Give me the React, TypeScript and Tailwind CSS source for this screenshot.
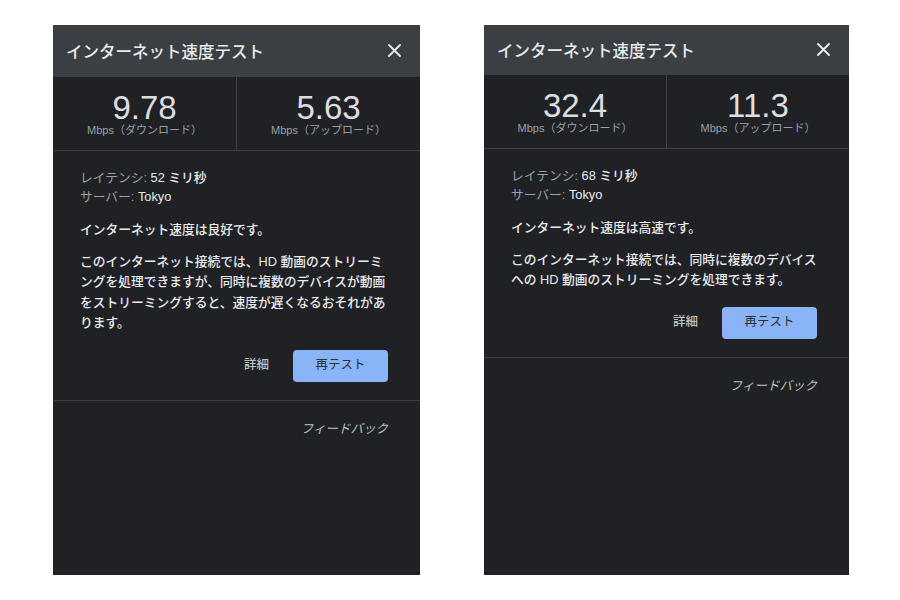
const jp = { fontFamily: '"Liberation Sans", "Noto Sans CJK JP", sans-serif' };

interface SpeedResult {
    download: string;
    upload: string;
    latency: string;
    verdict: string;
    description: string;
    panelClass: string;
    headerClass: string;
}

const results: SpeedResult[] = [
    {
        download: "9.78",
        upload: "5.63",
        latency: "52",
        verdict: "インターネット速度は良好です。",
        description:
            "このインターネット接続では、HD 動画のストリーミングを処理できますが、同時に複数のデバイスが動画をストリーミングすると、速度が遅くなるおそれがあります。",
        panelClass: "w-[367px]",
        headerClass: "h-[52px]",
    },
    {
        download: "32.4",
        upload: "11.3",
        latency: "68",
        verdict: "インターネット速度は高速です。",
        description:
            "このインターネット接続では、同時に複数のデバイスへの HD 動画のストリーミングを処理できます。",
        panelClass: "w-[365px]",
        headerClass: "h-[50px]",
    },
];

function SpeedCell({ value, label, divider }: { value: string; label: string; divider?: boolean }) {
    return (
        <div
            className={
                "flex flex-1 flex-col items-center pt-[14px] pb-[13px]" +
                (divider ? " border-r border-[#3c4043]" : "")
            }
        >
            <div className="text-[33px] leading-[33px] text-[#dcdde0]" style={{ fontFamily: '"Liberation Sans", sans-serif' }}>
                {value}
            </div>
            <div className="text-[11px] leading-[13px] text-[#9aa0a6]">{label}</div>
        </div>
    );
}

function SpeedPanel({ result }: { result: SpeedResult }) {
    return (
        <div className={"flex h-[550px] flex-col bg-[#202124] " + result.panelClass} style={jp}>
            <div
                className={
                    "flex items-center justify-between bg-[#3b3e42] pr-[19px] pl-[13px] " + result.headerClass
                }
            >
                <span className="mt-[2px] text-[16.5px] font-medium text-[#e8eaed]">インターネット速度テスト</span>
                <svg width="13" height="13" viewBox="0 0 13 13" className="mb-[2px]">
                    <path d="M1 1L12 12M12 1L1 12" stroke="#e8eaed" strokeWidth="1.9" strokeLinecap="round" />
                </svg>
            </div>

            <div className="flex border-b border-[#3c4043]">
                <SpeedCell value={result.download} label="Mbps（ダウンロード）" divider />
                <SpeedCell value={result.upload} label="Mbps（アップロード）" />
            </div>

            <div className="border-b border-[#3c4043] pt-[18px] pr-[32px] pb-[18px] pl-[27px] text-[12.75px]">
                <div className="leading-[18.5px] text-[#9aa0a6]">
                    レイテンシ: <span className="font-medium text-[#e8eaed]">{result.latency} ミリ秒</span>
                </div>
                <div className="leading-[18.5px] text-[#9aa0a6]">
                    サーバー: <span className="font-medium text-[#e8eaed]">Tokyo</span>
                </div>
                <p className="mt-[14px] leading-[20.5px] font-medium text-[#e8eaed]">{result.verdict}</p>
                <p className="mt-[11px] leading-[20.5px] font-medium text-[#e8eaed]">{result.description}</p>
                <div className="mt-[16px] flex items-center justify-end gap-[24px]">
                    <span className="text-[12.5px] font-medium text-[#bdc1c6]">詳細</span>
                    <button className="h-[32px] w-[95px] rounded-[4px] bg-[#8ab4f8] text-[12.5px] text-[#2d3035]">
                        再テスト
                    </button>
                </div>
            </div>

            <div className="flex justify-end pt-[18px] pr-[32px]">
                <span className="text-[12.5px] leading-[20px] text-[#bdc1c6] italic">フィードバック</span>
            </div>
        </div>
    );
}

export default function App() {
    return (
        <div className="flex h-[600px] w-[900px] gap-[64px] bg-white pt-[25px] pl-[53px]">
            {results.map((result) => (
                <SpeedPanel key={result.download} result={result} />
            ))}
        </div>
    );
}
